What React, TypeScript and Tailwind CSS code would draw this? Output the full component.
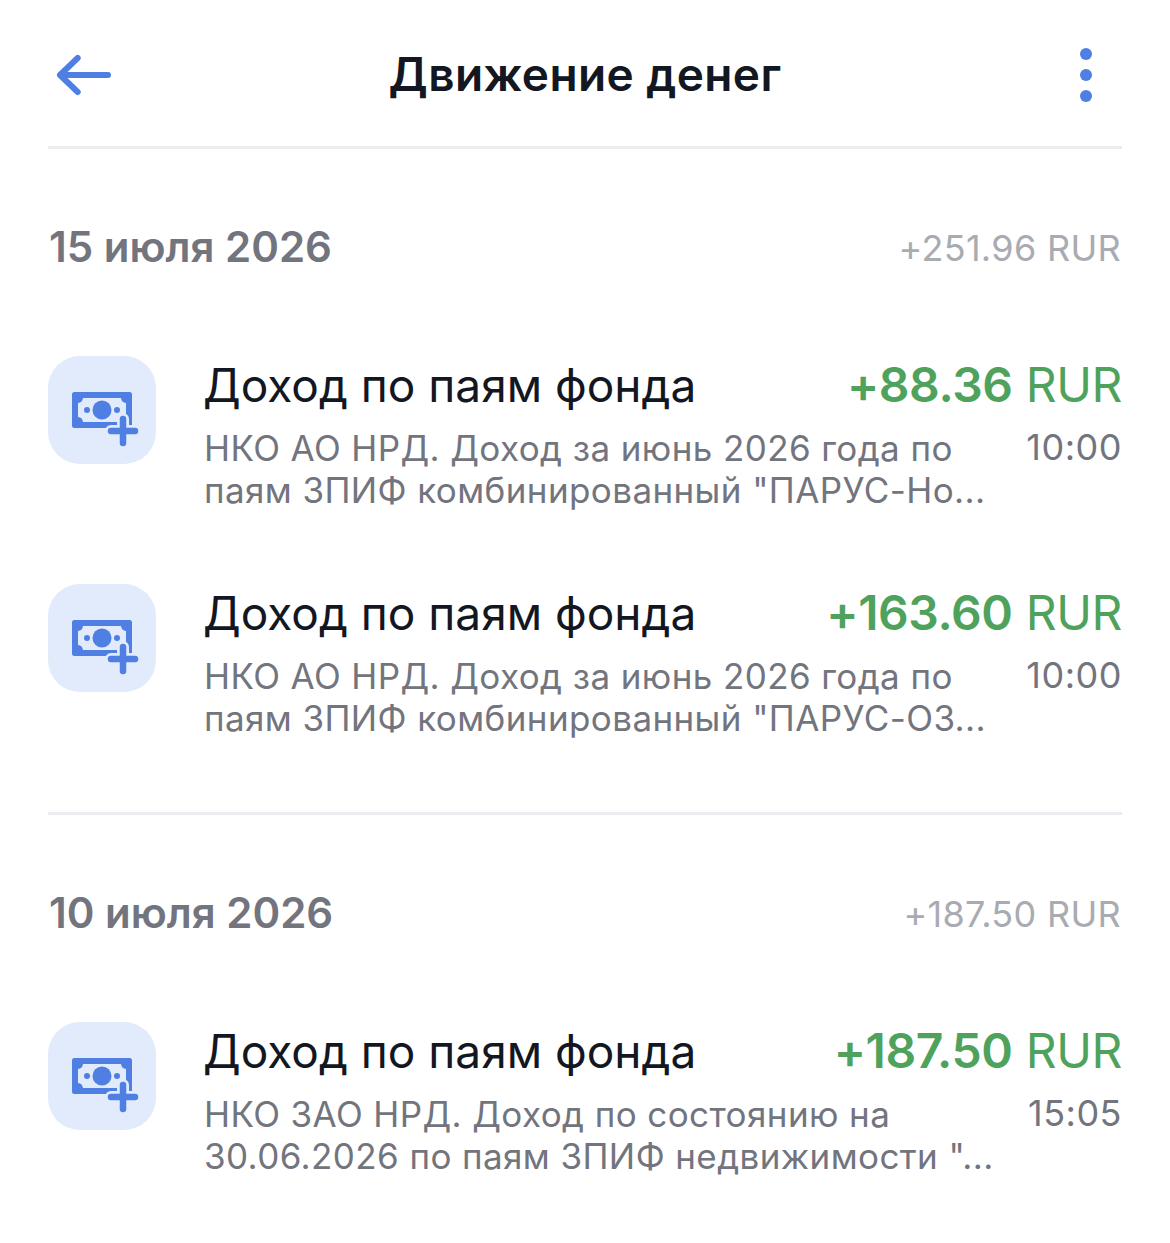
const font = { fontFamily: 'Inter, "Noto Sans", sans-serif' };

function Icon() {
  return (
    <div className="w-[108px] h-[108px] shrink-0 rounded-[32px] bg-[#e1ebfb] flex items-center justify-center">
      <svg width="108" height="108" viewBox="0 0 108 108" fill="none">
        <path
          fillRule="evenodd"
          clipRule="evenodd"
          d="M26.500 36H81.500A2.500 2.500 0 0 1 84 38.500V69.500A2.500 2.500 0 0 1 81.500 72H26.500A2.500 2.500 0 0 1 24 69.500V38.500A2.500 2.500 0 0 1 26.500 36ZM35 42H73Q73.500 46.500 78 47V61Q73.500 61.500 73 66H35Q34.500 61.500 30 61V47Q34.500 46.500 35 42Z"
          fill="#4f7fe3"
        />
        <circle cx="54" cy="54" r="9.500" fill="#4f7fe3" />
        <circle cx="39" cy="54" r="3" fill="#4f7fe3" />
        <circle cx="69" cy="54" r="3" fill="#4f7fe3" />
        <path d="M75 63V87M63 75H87" stroke="#e1ebfb" strokeWidth="12" strokeLinecap="round" />
        <path d="M75 63V87M63 75H87" stroke="#4f7fe3" strokeWidth="6.500" strokeLinecap="round" />
      </svg>
    </div>
  );
}

function Row({ amount, time, line1, line2 }: { amount: string; time: string; line1: string; line2: string }) {
  return (
    <div className="flex h-[228px]">
      <div className="w-[157px] shrink-0 pt-[12px]">
        <Icon />
      </div>
      <div className="flex-1 min-w-0 -ml-[1px]">
        <div className="flex justify-between items-center h-[60px] pt-[21px]">
          <span className="text-[#131722] text-[46px] leading-[60px] -ml-[1px]">Доход по паям фонда</span>
          <span className="text-[#4fa25c] text-[48px] tracking-[-0.4px] leading-[60px] whitespace-nowrap">
            <span className="font-semibold">{amount}</span> RUR
          </span>
        </div>
        <div className="flex justify-between mt-[23px]">
          <div className="text-[#72747e] text-[35px] leading-[42px] whitespace-nowrap tracking-[0.4px]">
            <div>{line1}</div>
            <div>{line2}</div>
          </div>
          <div className="text-[#72747e] text-[36px] tracking-[0.5px] leading-[42px] -mt-[1px]">{time}</div>
        </div>
      </div>
    </div>
  );
}

function DateHead({ date, sum }: { date: string; sum: string }) {
  return (
    <div className="flex justify-between items-center h-[60px] pl-[1px] pr-[1px]">
      <span className="text-[#72747e] text-[42px] font-semibold leading-[60px]">{date}</span>
      <span className="text-[#a9abb2] text-[36px] tracking-[0.3px] leading-[60px] mt-[2px]">{sum}</span>
    </div>
  );
}

export default function App() {
  return (
    <div className="w-[1170px] h-[1243px] bg-white overflow-hidden px-[48px]" style={font}>
      <header className="relative h-[149px] border-b-[3px] border-[#ebedf0] flex items-center justify-center pt-[2px]">
        <svg className="absolute left-[8px] top-[50px]" width="56" height="50" viewBox="0 0 56 50" fill="none">
          <path d="M21.700 8L4 25L21.700 42M4 25H52" stroke="#4f7fe3" strokeWidth="6" strokeLinecap="round" strokeLinejoin="round" />
        </svg>
        <h1 className="text-[#131722] text-[46px] font-semibold tracking-[0.4px]">Движение денег</h1>
        <div className="absolute left-[1032px] top-[48px] flex flex-col gap-[9px]">
          <span className="w-[12px] h-[12px] rounded-full bg-[#4f7fe3]" />
          <span className="w-[12px] h-[12px] rounded-full bg-[#4f7fe3]" />
          <span className="w-[12px] h-[12px] rounded-full bg-[#4f7fe3]" />
        </div>
      </header>
      <section className="pt-[68px] h-[666px] border-b-[3px] border-[#ebedf0]">
        <DateHead date="15 июля 2026" sum="+251.96 RUR" />
        <div className="pt-[67px]">
          <Row amount="+88.36" time="10:00" line1="НКО АО НРД. Доход за июнь 2026 года по" line2={'паям ЗПИФ комбинированный "ПАРУС-Но...'} />
          <Row amount="+163.60" time="10:00" line1="НКО АО НРД. Доход за июнь 2026 года по" line2={'паям ЗПИФ комбинированный "ПАРУС-ОЗ...'} />
        </div>
      </section>
      <section className="pt-[68px]">
        <DateHead date="10 июля 2026" sum="+187.50 RUR" />
        <div className="pt-[67px]">
          <Row amount="+187.50" time="15:05" line1="НКО ЗАО НРД. Доход по состоянию на" line2={'30.06.2026 по паям ЗПИФ недвижимости "...'} />
        </div>
      </section>
    </div>
  );
}
